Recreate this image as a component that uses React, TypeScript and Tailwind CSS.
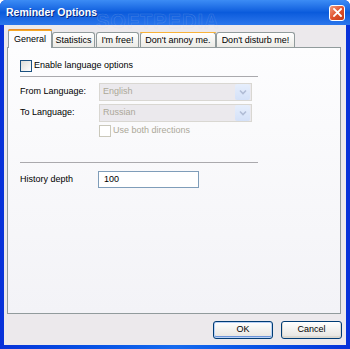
import React from 'react';

const font = "font-['Liberation_Sans',Arial,sans-serif]";

const Check = ({ disabled = false }: { disabled?: boolean }) => (
  <span
    className={
      disabled
        ? 'w-[12px] h-[12px] border border-[#cac8bb] bg-white shrink-0'
        : 'w-[12px] h-[12px] border border-[#1c5180] bg-gradient-to-br from-[#dcdcd7] to-white shrink-0'
    }
  />
);

const Select = ({ value }: { value: string }) => (
  <div className="w-[153px] h-[18px] border border-[#d9d7d2] bg-[#ebe9ed] flex items-center">
    <span className="flex-1 pl-[3px] text-[#aca899]">{value}</span>
    <span className="w-[15px] h-[16px] mr-px bg-gradient-to-b from-[#e6eefc] to-[#d4e1f8] rounded-[2px] flex items-center justify-center">
      <svg width="8" height="6" viewBox="0 0 8 6">
        <path d="M1 1.5 L4 4.5 L7 1.5" stroke="#b1bdd6" strokeWidth="1.6" fill="none" />
      </svg>
    </span>
  </div>
);

const Tab = ({ label, w, active = false, hot = false, ml = '' }: { label: string; w: string; active?: boolean; hot?: boolean; ml?: string }) => {
  if (active) {
    return (
      <div className={`${w} ${ml} h-[19px] -mb-px relative z-10 bg-[#fcfcfe] border border-[#919b9c] border-b-0 rounded-t-[3px] flex flex-col`}>
        <div className="h-[2px] -mx-px -mt-px bg-[#f6a827] rounded-t-[3px] border-t border-[#e68b2c]" />
        <div className="flex-1 flex items-center justify-center pt-px">{label}</div>
      </div>
    );
  }
  return (
    <div className={`${w} ${ml} h-[15px] bg-gradient-to-b from-white to-[#ecebe6] border border-[#919b9c] border-b-0 rounded-t-[3px] flex flex-col`}>
      {hot && <div className="h-[2px] -mx-px -mt-px bg-[#f8b33a] rounded-t-[3px]" />}
      <div className="flex-1 flex items-center justify-center pt-px">{label}</div>
    </div>
  );
};

const Button = ({ label, w, def = false }: { label: string; w: string; def?: boolean }) => (
  <div className={`${w} h-[18px] border border-[#003c74] rounded-[3px] bg-gradient-to-b from-white to-[#e6e4df] flex items-center justify-center ${def ? 'shadow-[inset_0_0_0_1px_#b9d1f6,inset_0_-1px_0_1px_#6c94d8]' : 'shadow-[inset_0_-1px_0_1px_#dbd8d0]'}`}>
    {label}
  </div>
);

export default function App() {
  return (
    <div className={`${font} text-[9px] text-black w-[350px] h-[349px] flex flex-col rounded-t-[6px] overflow-hidden bg-gradient-to-r from-[#0831d9] via-[#166aee] to-[#0831d9] relative`}>
      <div className="h-[25px] shrink-0 flex items-center justify-between pl-[6px] pr-[5px] bg-gradient-to-b from-[#3c8cf5] via-[#0a5bdc] to-[#2a76ec]">
        <span className="text-white font-bold text-[10.5px] [text-shadow:1px_1px_0_#0a2a80]">Reminder Options</span>
        <span className="w-[16px] h-[16px] rounded-[3px] border border-white bg-gradient-to-br from-[#f19a7e] via-[#e0522c] to-[#c23b18] flex items-center justify-center">
          <svg width="9" height="9" viewBox="0 0 9 9">
            <path d="M1 1 L8 8 M8 1 L1 8" stroke="white" strokeWidth="1.8" strokeLinecap="square" />
          </svg>
        </span>
      </div>
      <span className="absolute left-[96px] top-[6px] text-[20px] font-bold tracking-[1px] text-transparent [-webkit-text-stroke:0.5px_rgba(200,210,230,0.25)] pointer-events-none">
        SOFTPEDIA
      </span>
      <div className="flex-1 mx-[4px] mb-[4px] bg-[#ece9ec] flex flex-col pt-[4px] pl-[3px] pr-[4px] pb-[5px]">
        <div className="h-[18px] flex items-end pl-px relative z-10">
          <Tab label="General" w="w-[44px]" active />
          <Tab label="Statistics" w="w-[43px]" />
          <Tab label="I'm free!" w="w-[43px]" ml="ml-[1px]" />
          <Tab label="Don't annoy me." w="w-[76px]" ml="ml-[1px]" hot />
          <Tab label="Don't disturb me!" w="w-[79px]" />
        </div>
        <div className="h-[267px] mr-px border border-[#919b9c] bg-gradient-to-b from-[#fdfdfe] to-[#f3f3f7] pl-[12px] pt-[12px] flex flex-col">
          <div className="h-[12px] flex items-center gap-[2px]">
            <Check />
            <span>Enable language options</span>
          </div>
          <div className="mt-[4px] h-px w-[238px] bg-[#aaa9ad]" />
          <div className="mt-[6px] h-[18px] flex items-center">
            <span className="w-[79px]">From Language:</span>
            <Select value="English" />
          </div>
          <div className="mt-[3px] h-[18px] flex items-center">
            <span className="w-[79px]">To Language:</span>
            <Select value="Russian" />
          </div>
          <div className="mt-[3px] h-[12px] flex items-center gap-[2px] ml-[79px]">
            <Check disabled />
            <span className="text-[#aca899]">Use both directions</span>
          </div>
          <div className="mt-[25px] h-px w-[238px] bg-[#aaa9ad]" />
          <div className="mt-[8px] h-[17px] flex items-center">
            <span className="w-[78px]">History depth</span>
            <div className="w-[101px] h-[17px] border border-[#7f9db9] bg-white flex items-center pl-[5px]">100</div>
          </div>
        </div>
        <div className="mt-[7px] flex justify-end gap-[8px]">
          <Button label="OK" w="w-[60px]" def />
          <Button label="Cancel" w="w-[61px]" />
        </div>
      </div>
    </div>
  );
}
